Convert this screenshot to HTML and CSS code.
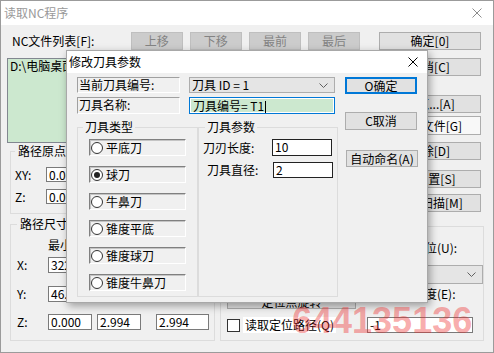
FILE: index.html
```html
<!DOCTYPE html>
<html lang="zh-CN">
<head>
  <meta charset="UTF-8" />
  <meta name="viewport" content="width=device-width, initial-scale=1.0" />
  <title>读取NC程序</title>
  <link rel="stylesheet" href="styles.css">
</head>
<body>
  <div class="win">
    <div class="titlebar">
      <span class="title">读取NC程序</span>
      <svg class="close" width="10" height="10" viewBox="0 0 10 10"><path d="M0.5 0.5L9.5 9.5M9.5 0.5L0.5 9.5" stroke="#8c8c8c" stroke-width="1" fill="none"/></svg>
    </div>
    <div class="win-body">
      <div class="upper">
        <div class="upper-left">
          <div class="toprow">
            <span class="toplabel">NC文件列表[F]:</span>
            <button class="btn btn-top disabled">上移</button>
            <button class="btn btn-top disabled">下移</button>
            <button class="btn btn-top disabled">最前</button>
            <button class="btn btn-top disabled">最后</button>
          </div>
          <div class="nclist">D:\电脑桌面\NC程序\刀具路径1.nc</div>
          <fieldset class="grp grp-origin">
            <legend>路径原点</legend>
            <div class="frow">
              <span class="flabel">XY:</span>
              <span class="edit e-mid">0.000</span>
              <span class="edit e-mid">0.000</span>
            </div>
            <div class="frow frow-z">
              <span class="flabel">Z:</span>
              <span class="edit e-mid">0.000</span>
            </div>
          </fieldset>
        </div>
        <div class="upper-right">
          <button class="btn rb rb1">确定[0]</button>
          <button class="btn rb rb2">取消[C]</button>
          <button class="btn rb rb3">浏览...[A]</button>
          <button class="btn rb rb4 light">添加文件[G]</button>
          <button class="btn rb rb5">删除[D]</button>
          <button class="btn rb rb6">原位置[S]</button>
          <button class="btn rb rb7">重新扫描[M]</button>
        </div>
      </div>
      <div class="lower">
        <fieldset class="grp grp-size">
          <legend>路径尺寸</legend>
          <div class="srow shead">
            <span class="slabel"></span>
            <span class="hcell h1">最小</span>
            <span class="hcell h2">最大</span>
            <span class="hcell">尺寸</span>
          </div>
          <div class="srow sx">
            <span class="slabel">X:</span>
            <span class="edit c1">322.506</span>
            <span class="edit c2">325.500</span>
            <span class="edit c3">2.994</span>
          </div>
          <div class="srow sy">
            <span class="slabel">Y:</span>
            <span class="edit c1">46.250</span>
            <span class="edit c2">49.244</span>
            <span class="edit c3">2.994</span>
          </div>
          <div class="srow sz">
            <span class="slabel">Z:</span>
            <span class="edit c1">0.000</span>
            <span class="edit c2">2.994</span>
            <span class="edit c3">2.994</span>
          </div>
        </fieldset>
        <fieldset class="grp grp-pos">
          <legend>定位</legend>
          <div class="pos-cols">
            <div class="pos-left">
              <button class="btn pos-btn">定位点旋转</button>
              <div class="chkrow">
                <span class="chk"></span>
                <span class="chktext">读取定位路径(Q)</span>
              </div>
            </div>
            <div class="pos-right">
              <span class="plabel pl1">定位(U):</span>
              <div class="combo pcombo">
                <span></span>
                <svg width="9" height="5" viewBox="0 0 9 5"><path d="M0.5 0.5L4.5 4.5L8.5 0.5" stroke="#606060" fill="none"/></svg>
              </div>
              <span class="plabel pl2">精度(E):</span>
              <span class="edit pedit">-1</span>
            </div>
          </div>
        </fieldset>
      </div>
    </div>
  </div>

  <!-- 修改刀具参数 对话框 -->
  <div class="dlg">
    <div class="dlg-title">
      <span>修改刀具参数</span>
      <svg width="10" height="10" viewBox="0 0 10 10"><path d="M0.5 0.5L9.5 9.5M9.5 0.5L0.5 9.5" stroke="#000" stroke-width="1" fill="none"/></svg>
    </div>
    <div class="dlg-body">
      <div class="dlg-main">
        <div class="drow">
          <span class="sunken dlabel">当前刀具编号:</span>
          <div class="combo dcombo">
            <span>刀具 ID = 1</span>
            <svg width="9" height="5" viewBox="0 0 9 5"><path d="M0.5 0.5L4.5 4.5L8.5 0.5" stroke="#606060" fill="none"/></svg>
          </div>
        </div>
        <div class="drow drow2">
          <span class="sunken dlabel">刀具名称:</span>
          <span class="dedit">刀具编号= T1<span class="caret"></span></span>
        </div>
        <div class="dgroups">
          <fieldset class="grp g-type">
            <legend>刀具类型</legend>
            <div class="radio"><span class="rdot"></span>平底刀</div>
            <div class="radio"><span class="rdot on"></span>球刀</div>
            <div class="radio"><span class="rdot"></span>牛鼻刀</div>
            <div class="radio"><span class="rdot"></span>锥度平底</div>
            <div class="radio"><span class="rdot"></span>锥度球刀</div>
            <div class="radio"><span class="rdot"></span>锥度牛鼻刀</div>
          </fieldset>
          <fieldset class="grp g-param">
            <legend>刀具参数</legend>
            <div class="prow">
              <span class="plab">刀刃长度:</span>
              <span class="pin">10</span>
            </div>
            <div class="prow prow2">
              <span class="plab">刀具直径:</span>
              <span class="pin">2</span>
            </div>
          </fieldset>
        </div>
      </div>
      <div class="dlg-btns">
        <button class="btn db db-ok">O确定</button>
        <button class="btn db db-cancel">C取消</button>
        <button class="btn db db-auto">自动命名(A)</button>
      </div>
    </div>
  </div>

  <div class="watermark">644135136</div>
</body>
</html>
```

FILE: styles.css
```css
* { box-sizing: border-box; }
body { margin: 0; font-family: "Noto Sans CJK SC", sans-serif; font-size: 12px; line-height: 14px; color: #000; background: #fff; }

.win { position: relative; width: 494px; height: 353px; border: 1px solid #9b9b9b; background: #f0f0f0; }
.titlebar { height: 24px; background: #fff; display: flex; align-items: center; justify-content: space-between; padding: 0 11px 0 3px; }
.title { color: #999; font-size: 12px; }
.win-body { padding: 7px 0 0 6px; }

.btn { font: inherit; font-size: 12px; line-height: 14px; color: #000; background: #e1e1e1; border: 1px solid #adadad; padding: 0; margin: 0; height: 18px; text-align: center; white-space: nowrap; }
.btn.disabled { background: #cccccc; border-color: #bfbfbf; color: #838383; }
.btn.light { background: #f8f8f8; }

.upper { display: flex; }
.upper-left { width: 360px; }
.toprow { display: flex; align-items: center; height: 18px; }
.toplabel { width: 126px; padding-left: 5px; }
.btn-top { width: 53px; margin-right: 7px; }
.nclist { margin-top: 8px; height: 85px; border: 1px solid #828790; background: #cce8cf; padding: 0 2px; }

.upper-right { margin-left: 12px; width: 102px; display: flex; flex-direction: column; }
.rb { width: 102px; }
.rb2 { margin-top: 8px; }
.rb3 { margin-top: 19px; }
.rb4 { margin-top: 3px; height: 19px; }
.rb5 { margin-top: 7px; }
.rb6 { margin-top: 10px; }
.rb7 { margin-top: 6px; }

.grp { margin: 0; min-width: 0; border: 1px solid #dcdcdc; }
.grp legend { padding: 0 3px; line-height: 14px; }

.grp-origin { margin: 1px 0 0 3px; width: 205px; padding: 9px 0 9px 4px; }
.frow { display: flex; align-items: center; height: 15px; }
.frow-z { margin-top: 7px; }
.flabel { width: 31px; }
.edit { display: block; height: 16px; background: #fff; border: 1px solid #7a7a7a; padding: 0 2px; line-height: 14px; white-space: nowrap; overflow: hidden; }
.e-mid { height: 15px; width: 70px; margin-right: 6px; line-height: 13px; }

.lower { display: flex; margin-top: 3px; }
.grp-size { margin-left: 3px; width: 205px; padding: 7px 0 9px 6px; }
.srow { display: flex; align-items: center; }
.shead { height: 14px; }
.sx { margin-top: 5px; }
.sy { margin-top: 13px; }
.sz { margin-top: 12px; }
.slabel { width: 31px; }
.hcell { width: 49px; }
.h2 { width: 59px; }
.c1 { width: 44px; }
.c2 { width: 44px; margin-left: 5px; }
.c3 { width: 53px; margin-left: 15px; }

.grp-pos { margin: 2px 0 0 5px; width: 264px; height: 122px; padding: 0 0 0 6px; }
.pos-cols { display: flex; }
.pos-left { width: 133px; }
.pos-btn { display: block; width: 129px; height: 14px; margin-top: 62px; border-top: 0; line-height: 4px; overflow: hidden; }
.chkrow { display: flex; align-items: center; margin-top: 8px; height: 16px; }
.chk { width: 13px; height: 13px; border: 1px solid #333; background: #fff; }
.chktext { margin-left: 3px; padding: 0 2px 0 2px; background: #fff; line-height: 16px; }
.pos-right { margin-left: 7px; width: 116px; display: flex; flex-direction: column; }
.plabel { height: 14px; white-space: nowrap; }
.pl1 { margin-top: 8px; padding-left: 46px; }
.pl2 { margin-top: 3px; padding-left: 46px; }
.combo { display: flex; align-items: center; justify-content: space-between; background: #e5e5e5; border: 1px solid #adadad; padding: 0 6px 0 2px; }
.pcombo { margin-top: 10px; height: 19px; }
.pedit { margin-top: 16px; width: 106px; }

.dlg { position: absolute; left: 66px; top: 50px; width: 362px; height: 253px; background: #f0f0f0; border: 1px solid #a8a8a8; box-shadow: 2px 3px 8px rgba(0, 0, 0, 0.35); }
.dlg-title { height: 22px; background: #fff; display: flex; align-items: center; justify-content: space-between; padding: 0 9px 0 2px; }
.dlg-body { display: flex; padding: 4px 0 0 10px; }
.dlg-main { width: 261px; }
.drow { display: flex; height: 16px; }
.drow2 { margin-top: 4px; height: 17px; }
.sunken { border: 1px solid; border-color: #a0a0a0 #fff #fff #a0a0a0; }
.dlabel { width: 103px; padding-left: 1px; line-height: 14px; }
.dcombo { width: 146px; margin-left: 9px; padding-left: 2px; }
.dedit { width: 146px; margin-left: 9px; border: 1px solid #0078d7; background: #cce8cf; box-shadow: inset 0 0 0 1px #fff; padding: 0 3px; line-height: 15px; white-space: nowrap; }
.caret { display: inline-block; width: 1px; height: 12px; background: #000; vertical-align: -2px; margin-left: 1px; }

.dgroups { display: flex; margin-top: 6px; }
.g-type { width: 121px; padding: 5px 0 5px 11px; }
.g-type legend { margin-left: -6px; padding: 0 2px; }
.g-param { width: 140px; padding: 5px 0 5px 4px; }
.g-param legend { margin-left: 2px; padding: 0 2px; }
.radio { display: flex; align-items: center; width: 97px; height: 17px; margin-bottom: 10px; border: 1px solid; border-color: #808080 #fff #fff #808080; box-shadow: inset 1px 1px 0 #c4c4c4; }
.radio:last-child { margin-bottom: 0; }
.rdot { width: 12px; height: 12px; border-radius: 50%; border: 1px solid #333; background: #fff; margin: 0 3px 0 1px; position: relative; }
.rdot.on::after { content: ""; position: absolute; left: 2px; top: 2px; width: 6px; height: 6px; border-radius: 50%; background: #222; }

.prow { display: flex; align-items: center; height: 17px; }
.prow2 { margin-top: 6px; height: 16px; padding-left: 4px; }
.plab { width: 69px; }
.prow2 .plab { width: 66px; }
.pin { width: 60px; height: 100%; background: #fff; border: 1px solid #222; padding: 0 2px; line-height: 14px; }

.dlg-btns { margin-left: 7px; width: 72px; display: flex; flex-direction: column; }
.db { width: 72px; height: 17px; }
.db-ok { border: 2px solid #0078d7; line-height: 13px; }
.db-cancel { margin-top: 18px; height: 18px; }
.db-auto { margin-top: 20px; margin-left: 1px; }

.watermark { position: absolute; left: 292px; top: 303px; font-family: "Liberation Sans", Arial, sans-serif; font-weight: bold; font-size: 36px; line-height: 36px; color: rgba(238, 40, 40, 0.4); letter-spacing: 0; }
```
